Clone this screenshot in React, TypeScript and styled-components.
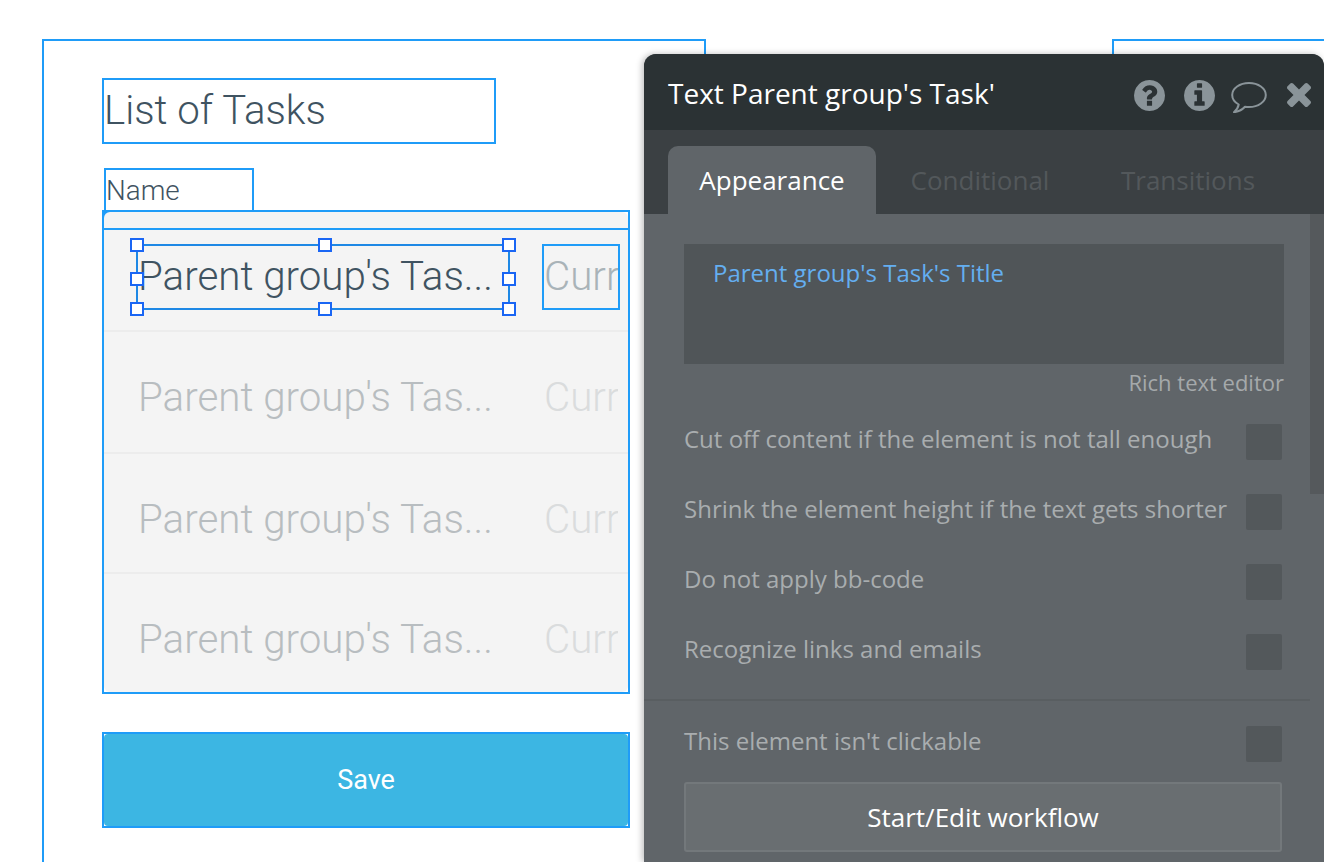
import React from "react";
import styled, { createGlobalStyle } from "styled-components";

const BLUE = "#1f9cf8";
const ROBOTO = `Roboto, "Liberation Sans", sans-serif`;
const OPEN_SANS = `"Open Sans", "Liberation Sans", sans-serif`;

const GlobalStyle = createGlobalStyle`
  html, body {
    margin: 0;
    padding: 0;
    background: #fff;
    overflow: hidden;
  }
  * {
    box-sizing: border-box;
  }
`;

const Canvas = styled.div`
  position: relative;
  width: 1324px;
  height: 862px;
  overflow: hidden;
  background: #fff;
  display: flex;
  align-items: flex-start;
  padding: 39px 0 0 42px;
`;

const PageFrame = styled.div`
  flex: none;
  width: 664px;
  height: 900px;
  border: 2px solid ${BLUE};
  padding: 37px 0 0 58px;
`;

const SecondFrame = styled.div`
  flex: none;
  width: 300px;
  height: 900px;
  margin-left: 406px;
  border: 2px solid ${BLUE};
`;

const TitleBox = styled.div`
  width: 394px;
  height: 66px;
  border: 2px solid ${BLUE};
  font: 300 40.2px/62px ${ROBOTO};
  color: #3f5361;
`;

const NameBox = styled.div`
  width: 150px;
  height: 44px;
  margin: 24px 0 0 2px;
  border: 2px solid ${BLUE};
  font: 300 27.8px/41px ${ROBOTO};
  color: #3f5361;
`;

const RepeatingGroup = styled.div`
  width: 528px;
  height: 484px;
  margin-top: -2px;
  border: 2px solid ${BLUE};
  background: linear-gradient(135deg, ${BLUE} 7px, #fff 7px);
`;

const GroupInner = styled.div`
  height: 100%;
  background: #f4f4f4;
  border-radius: 6px;
  display: flex;
  flex-direction: column;
`;

const GroupHeader = styled.div`
  flex: none;
  height: 18px;
  border-bottom: 2px solid ${BLUE};
`;

const Row = styled.div<{ $height: number; $first?: boolean }>`
  flex: none;
  height: ${(p) => p.$height}px;
  display: flex;
  align-items: flex-start;
  gap: 32px;
  padding: ${(p) => (p.$first ? 14 : 33)}px 0 0 32px;
  border-bottom: 2px solid #ececec;
  &:last-child {
    border-bottom: 0;
  }
`;

const TextCell = styled.div<{ $selected?: boolean }>`
  position: relative;
  flex: none;
  width: 374px;
  height: 66px;
  border: 2px solid ${(p) => (p.$selected ? "#1e88e5" : "transparent")};
  font: 300 40.3px/62px ${ROBOTO};
  white-space: nowrap;
  color: ${(p) => (p.$selected ? "#3f5361" : "#b8bdc0")};
`;

const CurrCell = styled.div<{ $selected?: boolean }>`
  flex: none;
  width: 78px;
  height: 66px;
  overflow: hidden;
  border: 2px solid ${(p) => (p.$selected ? BLUE : "transparent")};
  font: 300 40.3px/62px ${ROBOTO};
  white-space: nowrap;
  color: ${(p) => (p.$selected ? "#a9b3b8" : "#dadcdd")};
`;

// offsets are measured from the centre of the selection outline's top left
const Handle = styled.span<{ $x: number; $y: number }>`
  position: absolute;
  left: ${(p) => p.$x - 8}px;
  top: ${(p) => p.$y - 8}px;
  width: 14px;
  height: 14px;
  background: #fff;
  border: 2px solid #1a66f4;
`;

const SaveButton = styled.div`
  width: 528px;
  height: 96px;
  margin-top: 38px;
  border: 2px solid ${BLUE};
  background: #fff;
`;

const SaveFace = styled.div`
  height: 100%;
  background: #3cb6e3;
  border-radius: 4px;
  display: flex;
  align-items: center;
  justify-content: center;
  font: 400 27px/1 ${ROBOTO};
  color: #fff;
`;

const Panel = styled.div`
  position: absolute;
  left: 644px;
  top: 54px;
  width: 680px;
  height: 808px;
  background: #606569;
  border-radius: 12px 12px 0 0;
  box-shadow: -2px 0 6px rgba(0, 0, 0, 0.25);
  display: flex;
  flex-direction: column;
`;

const PanelHeader = styled.div`
  flex: none;
  height: 76px;
  background: #2b3234;
  border-radius: 12px 12px 0 0;
  display: flex;
  align-items: center;
  padding: 2px 13px 0 24px;
  font: 400 28px/1 ${OPEN_SANS};
  color: #fff;
`;

const PanelTitle = styled.div`
  flex: 1;
`;

const IconRow = styled.div`
  display: flex;
  align-items: center;
  margin-top: 4px;
  color: #8a9499;
  svg {
    display: block;
    flex: none;
  }
`;

const HeaderIcon = styled.span<{ $gap: number }>`
  display: flex;
  margin-left: ${(p) => p.$gap}px;
`;

const Tabs = styled.div`
  flex: none;
  height: 84px;
  background: #3b4043;
  display: flex;
  align-items: flex-end;
  padding-left: 24px;
`;

const Tab = styled.div<{ $active?: boolean; $width: number }>`
  width: ${(p) => p.$width}px;
  height: 68px;
  border-radius: 10px 10px 0 0;
  background: ${(p) => (p.$active ? "#606569" : "transparent")};
  color: ${(p) => (p.$active ? "#fff" : "#53585b")};
  font: 400 26px/68px ${OPEN_SANS};
  text-align: center;
`;

const PanelBody = styled.div`
  position: relative;
  flex: 1;
  padding: 30px 42px 0 40px;
`;

const Scrollbar = styled.div`
  position: absolute;
  right: 0;
  top: 0;
  width: 14px;
  height: 280px;
  background: #55595c;
`;

const TextEditor = styled.div`
  width: 600px;
  height: 120px;
  background: #505558;
  padding: 14px 29px;
  font: 400 24px/30px ${OPEN_SANS};
  color: #64aef0;
`;

const RichLink = styled.div`
  width: 600px;
  margin-top: 4px;
  text-align: right;
  font: 400 22px/28px ${OPEN_SANS};
  color: #a5a9ab;
`;

const Options = styled.div`
  margin-top: 11px;
`;

const OptionRow = styled.div`
  display: flex;
  align-items: center;
  justify-content: space-between;
  height: 70px;
  font: 400 24px/1 ${OPEN_SANS};
  color: #a9adaf;
`;

const OptionLabel = styled.span`
  margin-top: -6px;
`;

const CheckBox = styled.div`
  flex: none;
  width: 36px;
  height: 36px;
  border-radius: 2px;
  background: #53585b;
`;

const Divider = styled.div`
  height: 2px;
  width: 666px;
  margin: 12px 0 8px -40px;
  background: #595e61;
`;

const WorkflowButton = styled.div`
  width: 598px;
  height: 70px;
  margin-top: 3px;
  background: #696e71;
  border: 2px solid #73787b;
  border-radius: 3px;
  display: flex;
  align-items: center;
  justify-content: center;
  font: 400 26px/1 ${OPEN_SANS};
  color: #fff;
`;

const handles: [number, number][] = [
  [0, 0],
  [188, 0],
  [372, 0],
  [0, 34],
  [372, 34],
  [0, 64],
  [188, 64],
  [372, 64],
];

const rows = [122, 120, 118];

const options = [
  "Cut off content if the element is not tall enough",
  "Shrink the element height if the text gets shorter",
  "Do not apply bb-code",
  "Recognize links and emails",
];

const QuestionIcon = () => (
  <svg width="31" height="31" viewBox="0 0 1536 1536" fill="currentColor" fillRule="evenodd">
    <path d="M896 1248v-192q0-14-9-23t-23-9h-192q-14 0-23 9t-9 23v192q0 14 9 23t23 9h192q14 0 23-9t9-23zm256-672q0-88-55.500-163t-138.500-116-170-41q-243 0-371 213-15 24 8 42l132 100q7 6 19 6 16 0 25-12 53-68 86-92 34-24 86-24 48 0 85.500 26t37.500 59q0 38-20 61t-68 45q-63 28-115.500 86.500t-52.500 125.500v36q0 14 9 23t23 9h192q14 0 23-9t9-23q0-19 21.500-49.500t54.500-49.500q32-18 49-28.500t46-35 44.500-48 28-60.500 12.500-81zm384 192q0 209-103 385.500t-279.500 279.500-385.500 103-385.500-103-279.500-279.500-103-385.500 103-385.500 279.500-279.500 385.500-103 385.500 103 279.500 279.500 103 385.500z" />
  </svg>
);

const InfoIcon = () => (
  <svg width="31" height="31" viewBox="0 0 1536 1536" fill="currentColor" fillRule="evenodd">
    <path d="M1024 1248v-160q0-14-9-23t-23-9h-96v-512q0-14-9-23t-23-9h-320q-14 0-23 9t-9 23v160q0 14 9 23t23 9h96v320h-96q-14 0-23 9t-9 23v160q0 14 9 23t23 9h448q14 0 23-9t9-23zm-128-896v-160q0-14-9-23t-23-9h-192q-14 0-23 9t-9 23v160q0 14 9 23t23 9h192q14 0 23-9t9-23zm640 416q0 209-103 385.500t-279.500 279.500-385.500 103-385.500-103-279.500-279.500-103-385.500 103-385.500 279.500-279.500 385.500-103 385.500 103 279.500 279.500 103 385.500z" />
  </svg>
);

const SpeechIcon = () => (
  <svg width="36" height="36" viewBox="0 0 36 36" fill="none">
    <path
      d="M18 6C8.600 6 1.200 11.400 1.200 18c0 3.900 2.600 7.300 6.500 9.500-.4 2.800-2.200 5.400-4.700 7.700 4.300-.5 8.600-3 11-5.500 1.300.2 2.600.3 4 .3C27.400 30 34.800 24.600 34.800 18S27.400 6 18 6Z"
      stroke="currentColor"
      strokeWidth="2"
      strokeLinejoin="round"
    />
  </svg>
);

const CloseIcon = () => (
  <svg width="24" height="24" viewBox="110 366 1188 1188" fill="currentColor">
    <path d="M1298 1322q0 40-28 68l-136 136q-28 28-68 28t-68-28l-294-294-294 294q-28 28-68 28t-68-28l-136-136q-28-28-28-68t28-68l294-294-294-294q-28-28-28-68t28-68l136-136q28-28 68-28t68 28l294 294 294-294q28-28 68-28t68 28l136 136q28 28 28 68t-28 68l-294 294 294 294q28 28 28 68z" />
  </svg>
);

const App = () => (
  <>
    <GlobalStyle />
    <Canvas>
      <PageFrame>
        <TitleBox>List of Tasks</TitleBox>
        <NameBox>Name</NameBox>
        <RepeatingGroup>
          <GroupInner>
            <GroupHeader />
            <Row $height={102} $first>
              <TextCell $selected>
                Parent group's Tas...
                {handles.map(([x, y]) => (
                  <Handle key={`${x}-${y}`} $x={x} $y={y} />
                ))}
              </TextCell>
              <CurrCell $selected>Curr</CurrCell>
            </Row>
            {rows.map((h) => (
              <Row key={h} $height={h}>
                <TextCell>Parent group's Tas...</TextCell>
                <CurrCell>Curr</CurrCell>
              </Row>
            ))}
          </GroupInner>
        </RepeatingGroup>
        <SaveButton>
          <SaveFace>Save</SaveFace>
        </SaveButton>
      </PageFrame>
      <SecondFrame />

      <Panel>
        <PanelHeader>
          <PanelTitle>Text Parent group's Task'</PanelTitle>
          <IconRow>
            <HeaderIcon $gap={0}>
              <QuestionIcon />
            </HeaderIcon>
            <HeaderIcon $gap={19}>
              <InfoIcon />
            </HeaderIcon>
            <HeaderIcon $gap={16}>
              <SpeechIcon />
            </HeaderIcon>
            <HeaderIcon $gap={20}>
              <CloseIcon />
            </HeaderIcon>
          </IconRow>
        </PanelHeader>
        <Tabs>
          <Tab $active $width={208}>
            Appearance
          </Tab>
          <Tab $width={208}>Conditional</Tab>
          <Tab $width={208}>Transitions</Tab>
        </Tabs>
        <PanelBody>
          <Scrollbar />
          <TextEditor>Parent group's Task's Title</TextEditor>
          <RichLink>Rich text editor</RichLink>
          <Options>
            {options.map((o) => (
              <OptionRow key={o}>
                <OptionLabel>{o}</OptionLabel>
                <CheckBox />
              </OptionRow>
            ))}
          </Options>
          <Divider />
          <OptionRow>
            <OptionLabel>This element isn't clickable</OptionLabel>
            <CheckBox />
          </OptionRow>
          <WorkflowButton>Start/Edit workflow</WorkflowButton>
        </PanelBody>
      </Panel>
    </Canvas>
  </>
);

export default App;
